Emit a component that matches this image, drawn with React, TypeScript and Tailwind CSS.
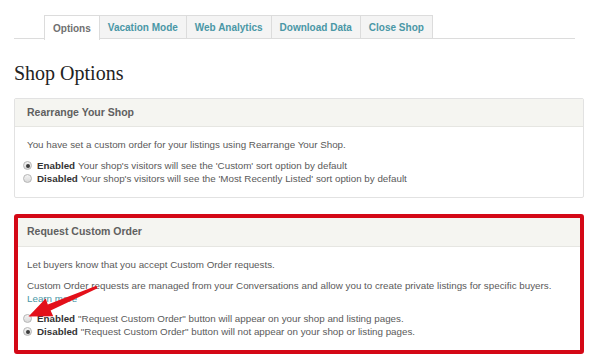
import React from "react";

const sans = { fontFamily: '"Liberation Sans", Arial, sans-serif' };

function Radio({ checked }: { checked: boolean }) {
  return (
    <span className="relative -ml-[4px] mr-[5px] inline-flex h-[9px] w-[9px] shrink-0 items-center justify-center rounded-full border border-[#b5b5b5] bg-[linear-gradient(#f4f4f4,#d9d9d9)]">
      {checked && <span className="h-[4px] w-[4px] rounded-full bg-[#3c3c3c]" />}
    </span>
  );
}

function RadioRow({ checked, label, text }: { checked: boolean; label: string; text: string }) {
  return (
    <div className="flex h-[13px] items-center whitespace-nowrap">
      <Radio checked={checked} />
      <span className="font-bold text-[#333]">{label}</span>
      <span className="ml-[3px]">{text}</span>
    </div>
  );
}

export default function App() {
  const tabs = ["Options", "Vacation Mode", "Web Analytics", "Download Data", "Close Shop"];
  return (
    <div className="relative h-[361px] w-[600px] overflow-hidden bg-white" style={sans}>
      <div className="pl-[14px] pt-[15px]">
        <div className="flex h-[24px] w-[561px] border-b border-[#dcdcdc] pl-[30px]">
          {tabs.map((t, i) => (
            <div
              key={t}
              className={
                i === 0
                  ? "-mb-px flex h-[25px] items-center border border-b-0 border-[#dcdcdc] bg-white px-[8px] text-[10px] font-bold text-[#707070]"
                  : "flex h-[24px] items-center border border-l-0 border-[#dcdcdc] bg-[#f4f4f4] px-[8px] text-[10px] font-bold text-[#4a97a6]"
              }
            >
              {t}
            </div>
          ))}
        </div>

        <h1
          className="mt-[22px] text-[20px] leading-[24px] text-[#222]"
          style={{ fontFamily: '"Liberation Serif", "Times New Roman", serif' }}
        >
          Shop Options
        </h1>

        <div className="mt-[13px] w-[570px] rounded-[2px] border border-[#e2e2e2] text-[9.8px] text-[#5a5a5a]">
          <div className="flex h-[28px] items-center border-b border-[#e6e6e2] bg-[#f5f5f1] pl-[12px] text-[10.5px] font-bold text-[#606060]">
            Rearrange Your Shop
          </div>
          <div className="px-[12px] pb-[12px] pt-[11px] leading-[13px]">
            <p>You have set a custom order for your listings using Rearrange Your Shop.</p>
            <div className="mt-[8px]">
              <RadioRow checked label="Enabled" text="Your shop's visitors will see the 'Custom' sort option by default" />
              <RadioRow checked={false} label="Disabled" text="Your shop's visitors will see the 'Most Recently Listed' sort option by default" />
            </div>
          </div>
        </div>

        <div className="relative mt-[19px] w-[570px] rounded-[2px] border border-[#e2e2e2] text-[9.8px] text-[#5a5a5a]">
          <div className="flex h-[29px] items-center border-b border-[#e6e6e2] bg-[#f5f5f1] pl-[12px] text-[10.5px] font-bold text-[#606060]">
            Request Custom Order
          </div>
          <div className="px-[12px] pb-[13px] pt-[11px] leading-[13px]">
            <p>Let buyers know that you accept Custom Order requests.</p>
            <p className="mt-[8px]">
              Custom Order requests are managed from your Conversations and allow you to create private listings for specific buyers.
            </p>
            <p className="text-[#4a97a6]">Learn more</p>
            <div className="mt-[7px]">
              <RadioRow checked={false} label="Enabled" text={'"Request Custom Order" button will appear on your shop and listing pages.'} />
              <RadioRow checked label="Disabled" text={'"Request Custom Order" button will not appear on your shop or listing pages.'} />
            </div>
          </div>
          <div className="pointer-events-none absolute -bottom-[3px] -left-px -right-px -top-[4px] rounded-[3px] border-[4px] border-[#d40816]" />
        </div>
      </div>

      <svg className="pointer-events-none absolute left-0 top-0" width="600" height="361" viewBox="0 0 600 361">
        <polygon
          points="97.6,288.2 96.4,285.8 47.8,304.6 45.7,298.6 28.5,316.5 53.2,316.2 50.6,310.4"
          fill="#e3101a"
        />
      </svg>
    </div>
  );
}
